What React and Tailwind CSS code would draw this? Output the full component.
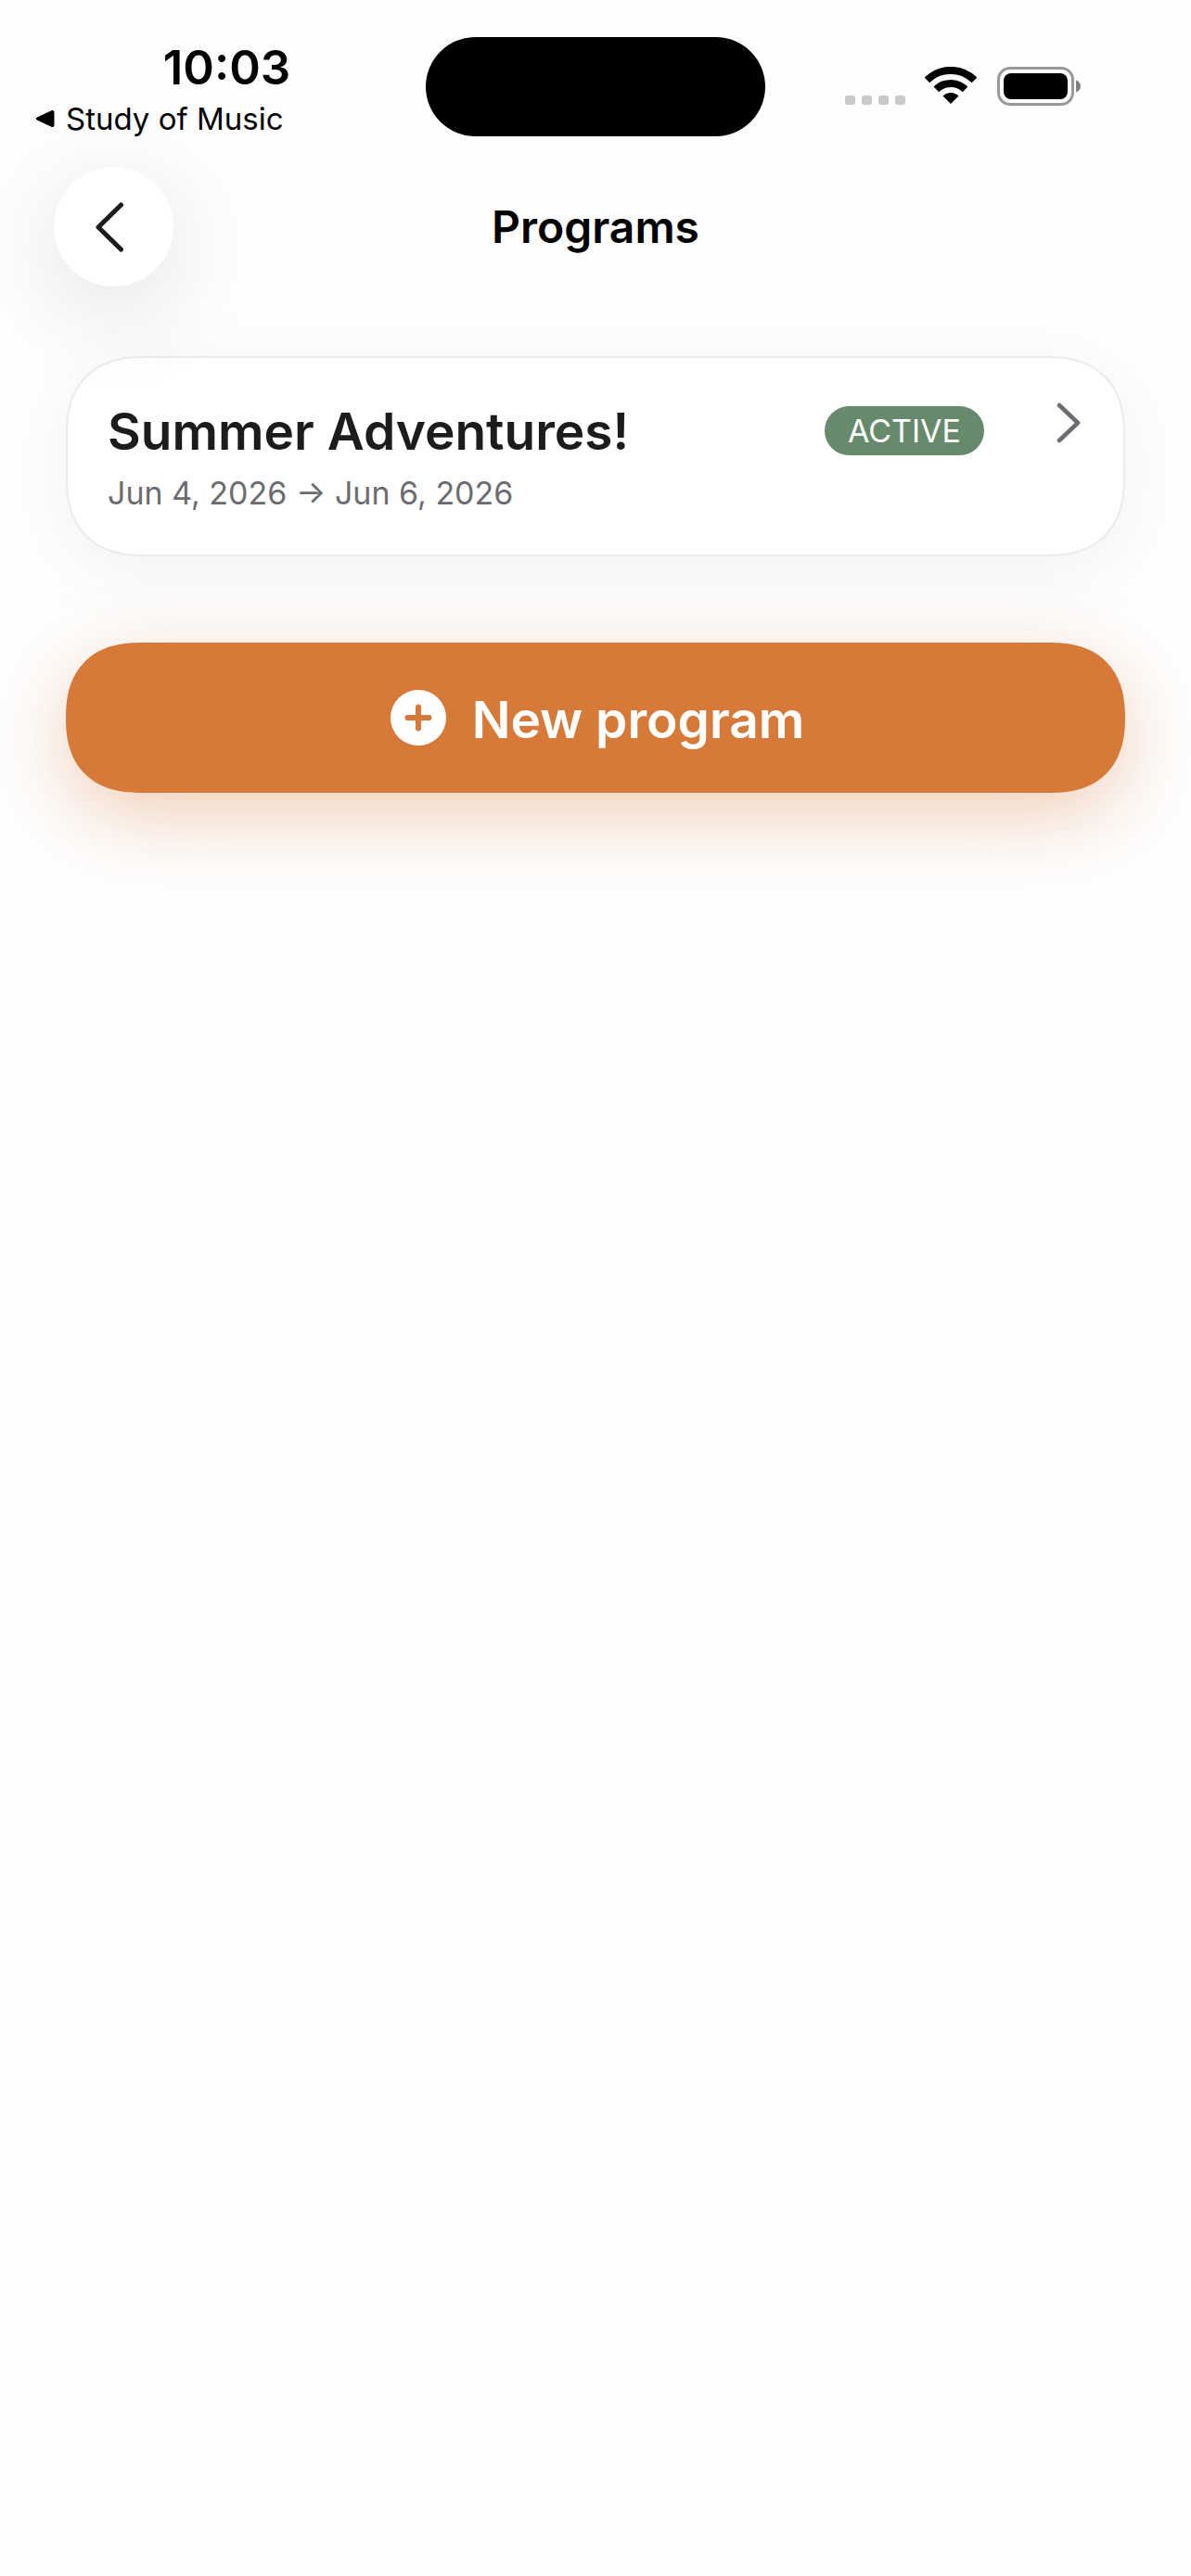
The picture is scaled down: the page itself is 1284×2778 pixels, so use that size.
const programs = [
  {
    id: 1,
    name: 'Summer Adventures!',
    startDate: 'Jun 4, 2026',
    endDate: 'Jun 6, 2026',
    status: 'ACTIVE'
  }
];

const WifiIcon = () => (
  <svg className="w-14 h-10" viewBox="0 0 56 40" fill="none" aria-hidden="true">
    <path d="M2.5 14.5A36 36 0 0 1 53.5 14.5" stroke="black" strokeWidth="8" />
    <path d="M12.4 24.4A22 22 0 0 1 43.6 24.4" stroke="black" strokeWidth="8" />
    <path d="M28 40L19.5 31.5A12 12 0 0 1 36.5 31.5Z" fill="black" />
  </svg>
);

const BatteryIcon = () => (
  <svg className="w-[90px] h-[42px]" viewBox="0 0 90 42" fill="none" aria-hidden="true">
    <rect x="1.5" y="1.5" width="80" height="39" rx="12.5" stroke="#999999" strokeWidth="3" />
    <rect x="7" y="7" width="69" height="28" rx="8" fill="black" />
    <path d="M85 14.5C88 15.5 90 18 90 21C90 24 88 26.500 85 27.500Z" fill="#808080" />
  </svg>
);

const StatusBar = () => (
  <div className="grid grid-cols-[1fr_366px_1fr] pt-10 text-black">
    <div className="pl-[30px]">
      <div className="text-center text-[51px] leading-[66px] font-semibold">10:03</div>
      <a href="#" className="flex items-center gap-3 px-2 text-[33px] leading-[44px]">
        <svg className="w-[21px] h-5" viewBox="0 0 21 20" aria-hidden="true">
          <path
            d="M2 9L18 1.500Q20 1 20 3V17Q20 19 18 18.500L2 11Q0 10 2 9Z"
            fill="black"
            stroke="black"
          />
        </svg>
        Study of Music
      </a>
    </div>

    <div className="h-[107px] rounded-full bg-black" />

    <div className="flex items-start pt-8 pl-[86px]">
      <div className="flex gap-[7px] pt-[31px]">
        {[0, 1, 2, 3].map((dot) => (
          <span key={dot} className="w-[11px] h-[10px] rounded-[3px] bg-[#c9c9c9]" />
        ))}
      </div>
      <div className="flex gap-[22px] pl-[21px]">
        <WifiIcon />
        <BatteryIcon />
      </div>
    </div>
  </div>
);

const Header = () => (
  <header className="grid grid-cols-[1fr_auto_1fr] items-center px-[58px] pt-[30px]">
    <button
      type="button"
      aria-label="Back"
      className="flex items-center justify-center w-[129px] h-[129px] pr-2.5 rounded-full bg-white shadow-[0_24px_108px_rgba(0,0,0,0.12)]"
    >
      <svg className="w-[30px] h-[54px]" viewBox="0 0 30 54" fill="none" aria-hidden="true">
        <path
          d="M27.500 3L3 27L27.500 51"
          stroke="#1c1c1e"
          strokeWidth="5"
          strokeLinecap="round"
          strokeLinejoin="round"
        />
      </svg>
    </button>
    <h1 className="text-5xl font-semibold text-black">Programs</h1>
  </header>
);

const ProgramCard = ({ program }) => (
  <a
    href="#"
    className="flex items-start justify-between h-[216px] pl-[43px] pr-[46px] pt-11 rounded-[84px] [corner-shape:superellipse(1.25)] border-2 border-[#ebebeb] bg-white shadow-[0_18px_90px_rgba(0,0,0,0.05)]"
  >
    <div>
      <h2 className="text-[55px] leading-[70px] font-semibold text-[#1c1c1e]">{program.name}</h2>
      <p className="text-[34px] leading-[64px] text-[#6c6c70]">
        {program.startDate} → {program.endDate}
      </p>
    </div>
    <div className="flex items-start gap-[78px] pt-1">
      <span className="mt-1 px-[25px] rounded-full bg-[#688a6c] text-[34px] leading-[53px] text-white">
        {program.status}
      </span>
      <svg className="w-[26px] h-11" viewBox="0 0 26 44" fill="none" aria-hidden="true">
        <path
          d="M3 3L23 22L3 41"
          stroke="#6c6c70"
          strokeWidth="4.5"
          strokeLinecap="round"
          strokeLinejoin="round"
        />
      </svg>
    </div>
  </a>
);

const App = () => {
  return (
    <div className="min-h-screen bg-[#fefefe] font-[Inter,sans-serif]">
      <StatusBar />
      <Header />
      <main className="px-[71px] pt-[75px]">
        {programs.map((program) => (
          <ProgramCard key={program.id} program={program} />
        ))}

        <button
          type="button"
          className="flex items-center justify-center gap-7 w-full h-[162px] mt-[93px] pt-1 pl-1 rounded-[81px] [corner-shape:superellipse(1.25)] bg-[#d77a39] text-[55px] font-semibold text-white shadow-[0_24px_84px_rgba(215,122,57,0.36)]"
        >
          <svg className="w-[60px] h-[60px] mb-1" viewBox="0 0 60 60" fill="none" aria-hidden="true">
            <circle cx="30" cy="30" r="30" fill="white" />
            <path d="M30 18.500V41.500M18.500 30H41.500" stroke="#d77a39" strokeWidth="6" strokeLinecap="round" />
          </svg>
          New program
        </button>
      </main>
    </div>
  );
};

export default App;
